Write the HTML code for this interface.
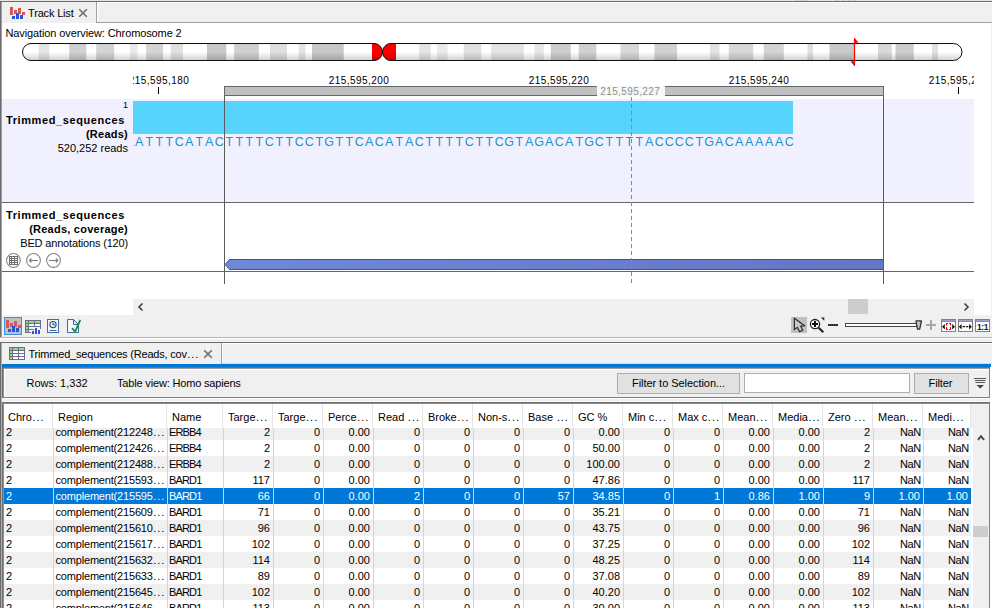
<!DOCTYPE html>
<html><head><meta charset="utf-8"><title>Track List</title>
<style>
html,body{margin:0;padding:0}
body{width:992px;height:608px;position:relative;overflow:hidden;background:#fff;font-family:"Liberation Sans",sans-serif;font-size:11px;color:#000}
.a{position:absolute}
.t{position:absolute;white-space:nowrap;line-height:14px}
.b{font-weight:bold}
.r{text-align:right}
.hd{position:absolute;top:404px;height:24px;background:#fff;line-height:27px;white-space:nowrap;overflow:hidden;box-sizing:border-box;padding-left:5px;border-right:1px solid #e5e5e5}
.row{position:absolute;left:4px;width:967px;height:16px}
.c{position:absolute;top:0;height:16px;line-height:17px;white-space:nowrap;overflow:hidden;box-sizing:border-box;padding:0 2px 0 2px;border-left:1px solid #d4d4d4}
.c.n{text-align:right;padding-right:3px}
.sel{background:#0078d7;color:#fff}
.g{background:#f0f0f0}
.e{letter-spacing:1px;margin-left:0.5px}
.c.nm{letter-spacing:-0.85px;padding-left:1px}
.c.rg{letter-spacing:-0.18px;padding-left:1.5px}
</style></head>
<body>
<div class="a" style="left:0;top:0;width:992px;height:1px;background:#e6e6e6"></div>
<div class="a" style="left:0;top:1px;width:992px;height:1px;background:#6d6d6d"></div>
<div class="a" style="left:795px;top:0;width:3px;height:1px;background:#cfcfcf"></div>
<div class="a" style="left:799px;top:0;width:3px;height:1px;background:#cfcfcf"></div>
<div class="a" style="left:803px;top:0;width:5px;height:1px;background:#cfcfcf"></div>
<div class="a" style="left:835px;top:0;width:4px;height:1px;background:#cfcfcf"></div>
<div class="a" style="left:842px;top:0;width:3px;height:1px;background:#cfcfcf"></div>
<div class="a" style="left:847px;top:0;width:3px;height:1px;background:#cfcfcf"></div>
<div class="a" style="left:852px;top:0;width:5px;height:1px;background:#cfcfcf"></div>
<div class="a" style="left:2px;top:2px;width:990px;height:21px;background:#f0f0f0"></div>
<div class="a" style="left:97px;top:2px;width:895px;height:1px;background:#fff"></div>
<div class="a" style="left:96px;top:2px;width:1px;height:21px;background:#a0a0a0"></div>
<div class="a" style="left:97px;top:3px;width:1px;height:19px;background:#fff"></div>
<div class="a" style="left:96px;top:22px;width:896px;height:1px;background:#a0a0a0"></div>
<div class="a" style="left:0;top:1px;width:1px;height:337px;background:#6d6d6d"></div>
<div class="a" style="left:1px;top:2px;width:1px;height:336px;background:#a0a0a0"></div>
<div class="a" style="left:991px;top:23px;width:1px;height:292px;background:#f0f0f0"></div>
<svg class="a" style="left:9px;top:6px" width="17" height="14" viewBox="9 6 17 14" shape-rendering="crispEdges"><rect x="10" y="7" width="3" height="8" fill="#d25a5a"/><rect x="14" y="10" width="3" height="4" fill="#d25a5a"/><rect x="18" y="8" width="3" height="6" fill="#d25a5a"/><rect x="22" y="12" width="3" height="3" fill="#d25a5a"/><rect x="12" y="16" width="3" height="3" fill="#2b55d4"/><rect x="16" y="13" width="3" height="6" fill="#2b55d4"/><rect x="20" y="15" width="3" height="4" fill="#2b55d4"/></svg>
<div class="t" style="left:28px;top:6px;letter-spacing:-0.17px">Track List</div>
<svg class="a" style="left:78px;top:8px" width="10" height="10" viewBox="0 0 10 10"><path d="M1.2 1.2 L8.8 8.8 M8.8 1.2 L1.2 8.8" stroke="#6e6e6e" stroke-width="1.6" fill="none"/></svg>
<div class="t" style="left:6px;top:26px;letter-spacing:-0.11px;margin-left:-0.5px">Navigation overview: Chromosome 2</div>
<svg class="a" style="left:0;top:36px" width="992" height="32" viewBox="0 36 992 32"><defs><linearGradient id="sh" x1="0" y1="0" x2="0" y2="1"><stop offset="0" stop-color="#000" stop-opacity="0.07"/><stop offset="0.15" stop-color="#000" stop-opacity="0"/><stop offset="0.5" stop-color="#000" stop-opacity="0"/><stop offset="1" stop-color="#000" stop-opacity="0.2"/></linearGradient><clipPath id="cl"><path d="M31 43.5 H374 C380 43.5 382.5 49 382.5 52 C382.5 49 385 43.5 391 43.5 H953.5 A8.5 8.5 0 0 1 953.5 60.5 H391 C385 60.5 382.5 55 382.5 52 C382.5 55 380 60.5 374 60.5 H31 A8.5 8.5 0 0 1 31 43.5 Z"/></clipPath></defs><g clip-path="url(#cl)"><rect x="22" y="43" width="941" height="18" fill="#fff"/><rect x="38.75" y="43" width="10.50" height="18" fill="#e4e4e4"/><rect x="69.25" y="43" width="17.00" height="18" fill="#d0d0d0"/><rect x="96.25" y="43" width="18.00" height="18" fill="#d4d4d4"/><rect x="130" y="43" width="7.50" height="18" fill="#eaeaea"/><rect x="146.25" y="43" width="16.75" height="18" fill="#d4d4d4"/><rect x="170.75" y="43" width="12.25" height="18" fill="#e0e0e0"/><rect x="207" y="43" width="19.25" height="18" fill="#c8c8c8"/><rect x="234.25" y="43" width="24.50" height="18" fill="#d0d0d0"/><rect x="270" y="43" width="17.00" height="18" fill="#dedede"/><rect x="298.75" y="43" width="6.75" height="18" fill="#e4e4e4"/><rect x="312" y="43" width="31.75" height="18" fill="#c8c8c8"/><rect x="419.25" y="43" width="11.50" height="18" fill="#e4e4e4"/><rect x="437" y="43" width="10.50" height="18" fill="#eaeaea"/><rect x="463.75" y="43" width="17.50" height="18" fill="#e0e0e0"/><rect x="491.25" y="43" width="32.50" height="18" fill="#e4e4e4"/><rect x="534.5" y="43" width="9.25" height="18" fill="#e6e6e6"/><rect x="550.75" y="43" width="20.00" height="18" fill="#cecece"/><rect x="578.75" y="43" width="17.50" height="18" fill="#d0d0d0"/><rect x="620.5" y="43" width="18.50" height="18" fill="#d8d8d8"/><rect x="654.5" y="43" width="22.50" height="18" fill="#d2d2d2"/><rect x="710" y="43" width="9.50" height="18" fill="#e2e2e2"/><rect x="728.75" y="43" width="24.50" height="18" fill="#d8d8d8"/><rect x="763.75" y="43" width="20.00" height="18" fill="#d4d4d4"/><rect x="807.5" y="43" width="5.50" height="18" fill="#e0e0e0"/><rect x="829.5" y="43" width="24.75" height="18" fill="#cacaca"/><rect x="878" y="43" width="13.75" height="18" fill="#d8d8d8"/><rect x="895.5" y="43" width="18.25" height="18" fill="#cecece"/><rect x="932" y="43" width="6.00" height="18" fill="#e0e0e0"/><rect x="372" y="43" width="24" height="18" fill="#ff0000"/><rect x="22" y="43" width="941" height="18" fill="url(#sh)"/></g><path d="M31 43.5 H374 C380 43.5 382.5 49 382.5 52 C382.5 49 385 43.5 391 43.5 H953.5 A8.5 8.5 0 0 1 953.5 60.5 H391 C385 60.5 382.5 55 382.5 52 C382.5 55 380 60.5 374 60.5 H31 A8.5 8.5 0 0 1 31 43.5 Z" fill="none" stroke="#111" stroke-width="1"/><path d="M854.5 38 V66" stroke="#ff0000" stroke-width="1.2"/><path d="M854.5 38 L858.5 42.5 L854.5 43 Z M854.5 66 L850.5 61.5 L854.5 61 Z" fill="#ff0000"/></svg>
<div class="a" style="left:2px;top:99px;width:972px;height:103px;background:#f0f0ff"></div>
<div class="a" style="left:2px;top:202px;width:972px;height:1px;background:#666"></div>
<div class="a" style="left:2px;top:271px;width:972px;height:1px;background:#666"></div>
<div class="a" style="left:133px;top:70px;width:841px;height:28px;overflow:hidden;font-size:10px;letter-spacing:0.45px">
<div class="t" style="left:-14.0px;width:80px;text-align:center;top:3.5px">215,595,180</div>
<div class="t" style="left:186.0px;width:80px;text-align:center;top:3.5px">215,595,200</div>
<div class="t" style="left:386.0px;width:80px;text-align:center;top:3.5px">215,595,220</div>
<div class="t" style="left:586.0px;width:80px;text-align:center;top:3.5px">215,595,240</div>
<div class="t" style="left:786.0px;width:80px;text-align:center;top:3.5px">215,595,260</div>
<div class="a" style="left:25px;top:17px;width:1px;height:7px;background:#000"></div>
<div class="a" style="left:825px;top:17px;width:1px;height:7px;background:#000"></div>
</div>
<div class="a" style="left:133px;top:101px;width:660px;height:33px;background:#56d4fd"></div>
<svg class="a" style="left:133px;top:134px" width="841" height="16" viewBox="0 0 841 16"><text x="-3.8 6.2 16.2 26.2 36.2 46.2 56.2 66.2 76.2 86.2 96.2 106.2 116.2 126.2 136.2 146.2 156.2 166.2 176.2 186.2 196.2 206.2 216.2 226.2 236.2 246.2 256.2 266.2 276.2 286.2 296.2 306.2 316.2 326.2 336.2 346.2 356.2 366.2 376.2 386.2 396.2 406.2 416.2 426.2 436.2 446.2 456.2 466.2 476.2 486.2 496.2 506.2 516.2 526.2 536.2 546.2 556.2 566.2 576.2 586.2 596.2 606.2 616.2 626.2 636.2 646.2 656.2" y="12.3" text-anchor="middle" font-family="Liberation Sans, sans-serif" font-size="12.5" fill="#1e90c8">AATTTCATACTTTTCTTCCTGTTCACATACTTTTCTTCGTAGACATGCTTTTACCCCTGACAAAAAC</text></svg>
<div class="t r" style="left:60px;width:68px;top:99.3px;font-size:9px;line-height:12px">1</div>
<div class="t r b" style="left:0;width:125px;top:113px;letter-spacing:0.6px">Trimmed_sequences</div>
<div class="t r b" style="left:0;width:128px;top:127px;letter-spacing:0.25px">(Reads)</div>
<div class="t r" style="left:0;width:128px;top:141px">520,252 reads</div>
<div class="t r b" style="left:0;width:125px;top:208px;letter-spacing:0.6px">Trimmed_sequences</div>
<div class="t r b" style="left:0;width:128px;top:222px;letter-spacing:0.24px">(Reads, coverage)</div>
<div class="t r" style="left:0;width:128px;top:236px;letter-spacing:-0.17px">BED annotations (120)</div>
<svg class="a" style="left:5px;top:252px" width="60" height="17" viewBox="5 252 60 17" fill="none" stroke="#868686" stroke-width="1.1"><circle cx="13.4" cy="260.45" r="6.9"/><circle cx="33.5" cy="260.45" r="6.9"/><circle cx="53.5" cy="260.45" r="6.9"/><path d="M9.5 256.5 H17.5 V264.5 H9.5 Z M9.5 258.5 H17.5 M9.5 260.5 H17.5 M9.5 262.5 H17.5 M11.5 256.5 V264.5 M14.5 256.5 V264.5" stroke="#6c6c6c" stroke-width="1" shape-rendering="crispEdges"/><path d="M29.4 260.5 H37.8 M31.4 258.5 L29.4 260.5 L31.4 262.5" stroke="#7c7c7c" stroke-width="1.2"/><path d="M49.1 260.5 H57.8 M55.8 258.5 L57.8 260.5 L55.8 262.5" stroke="#7c7c7c" stroke-width="1.2"/></svg>
<svg class="a" style="left:224px;top:257px" width="661" height="14" viewBox="224 257 661 14"><defs><linearGradient id="ag" x1="0" y1="0" x2="1" y2="0"><stop offset="0" stop-color="#7088d8"/><stop offset="1" stop-color="#6277c6"/></linearGradient></defs><path d="M229.5 259.5 H883.5 V269.5 H229.5 L225 264.5 Z" fill="url(#ag)" stroke="#3e4e9c" stroke-width="1"/></svg>
<div class="a" style="left:224px;top:86px;width:660px;height:10px;background:#c0c0c0;border:1px solid #666;box-sizing:border-box"></div>
<div class="a" style="left:224px;top:96px;width:1px;height:188px;background:#5c5c5c"></div>
<div class="a" style="left:883px;top:96px;width:1px;height:188px;background:#5c5c5c"></div>
<div class="a" style="left:631px;top:97px;height:186px;background:repeating-linear-gradient(to bottom,#888 0,#888 4px,transparent 4px,transparent 7px);width:1px"></div>
<div class="t" style="left:597px;top:86px;width:68px;height:10px;line-height:11px;background:#f8f8f8;color:#8e8e8e;text-align:center;font-size:10px;letter-spacing:0.4px;text-indent:-1.5px">215,595,227</div>
<div class="a" style="left:133px;top:299px;width:841px;height:16px;background:#f0f0f0"></div>
<div class="a" style="left:848px;top:299px;width:20px;height:15px;background:#cdcdcd"></div>
<svg class="a" style="left:136px;top:301.5px" width="10" height="10" viewBox="0 0 10 10"><path d="M6.5 1.5 L3 5 L6.5 8.5" stroke="#404040" stroke-width="1.6" fill="none"/></svg>
<svg class="a" style="left:961px;top:301.5px" width="10" height="10" viewBox="0 0 10 10"><path d="M3.5 1.5 L7 5 L3.5 8.5" stroke="#404040" stroke-width="1.6" fill="none"/></svg>
<div class="a" style="left:2px;top:315px;width:990px;height:22px;background:#f0f0f0"></div>
<div class="a" style="left:0;top:337px;width:992px;height:1px;background:#b4b4b4"></div>
<div class="a" style="left:0;top:338px;width:992px;height:1px;background:#fff"></div>
<div class="a" style="left:0;top:339px;width:992px;height:3px;background:#f0f0f0"></div>
<div class="a" style="left:0;top:342px;width:992px;height:1px;background:#6d6d6d"></div>
<div class="a" style="left:2px;top:343px;width:219px;height:1px;background:#f0f0f0"></div>
<div class="a" style="left:222px;top:343px;width:770px;height:1px;background:#fff"></div>
<div class="a" style="left:4px;top:317px;width:18px;height:18px;box-sizing:border-box;border:1px solid #3a8ee6;background:#c0c0c0"></div>
<svg class="a" style="left:5px;top:319px" width="17" height="14" viewBox="9 6 17 14" shape-rendering="crispEdges"><rect x="10" y="7" width="3" height="8" fill="#d25a5a"/><rect x="14" y="10" width="3" height="4" fill="#d25a5a"/><rect x="18" y="8" width="3" height="6" fill="#d25a5a"/><rect x="22" y="12" width="3" height="3" fill="#d25a5a"/><rect x="12" y="16" width="3" height="3" fill="#2b55d4"/><rect x="16" y="13" width="3" height="6" fill="#2b55d4"/><rect x="20" y="15" width="3" height="4" fill="#2b55d4"/></svg>
<svg class="a" style="left:25px;top:320px" width="17" height="15" viewBox="0 0 17 15" shape-rendering="crispEdges"><rect x="0" y="0" width="16" height="13" fill="#6c6c8c"/><rect x="1" y="1" width="2" height="2" fill="#9ad77a"/><rect x="4" y="1" width="5" height="2" fill="#9ad77a"/><rect x="10" y="1" width="5" height="2" fill="#9ad77a"/><rect x="1" y="4" width="2" height="2" fill="#9ad77a"/><rect x="4" y="4" width="5" height="2" fill="#f4f8ff"/><rect x="10" y="4" width="5" height="2" fill="#f4f8ff"/><rect x="1" y="7" width="2" height="2" fill="#9ad77a"/><rect x="4" y="7" width="5" height="2" fill="#f4f8ff"/><rect x="10" y="7" width="5" height="2" fill="#f4f8ff"/><rect x="1" y="10" width="2" height="2" fill="#9ad77a"/><rect x="4" y="10" width="5" height="2" fill="#f4f8ff"/><rect x="10" y="10" width="5" height="2" fill="#f4f8ff"/><rect x="6" y="10" width="4" height="5" fill="#f0f0f0"/><rect x="9" y="7" width="4" height="8" fill="#f0f0f0"/><rect x="12" y="9" width="4" height="6" fill="#f0f0f0"/><rect x="6" y="13" width="11" height="2" fill="#f0f0f0"/><rect x="7" y="11" width="2" height="3" fill="#2b55d4"/><rect x="10" y="8" width="2" height="6" fill="#2b55d4"/><rect x="13" y="10" width="2" height="4" fill="#2b55d4"/></svg>
<svg class="a" style="left:46px;top:318px" width="15" height="17" viewBox="46 318 15 17"><rect x="47.5" y="319.5" width="11" height="13" fill="#f4f8fc" stroke="#3b6ea8"/><circle cx="53" cy="324.6" r="3.1" fill="#fff" stroke="#2b5080" stroke-width="1.2"/><path d="M53 322.6 V324.8 H55" stroke="#2b5080" fill="none" stroke-width="1.1"/><path d="M49.5 330.5 H56.5" stroke="#3b6ea8"/></svg>
<svg class="a" style="left:66px;top:318px" width="17" height="17" viewBox="66 318 17 17"><path d="M67.5 319.5 H73.5 L78.5 324.5 V332.5 H67.5 Z" fill="#f4f8fc" stroke="#3b6ea8"/><path d="M73.5 319.5 V324.5 H78.5 Z" fill="#dfe8f2" stroke="#3b6ea8"/><path d="M72 328.2 L75.2 331.6 L80.3 319.8" fill="none" stroke="#1f8a2f" stroke-width="1.8"/></svg>
<div class="a" style="left:791px;top:317px;width:16px;height:16px;background:#c0c0c0"></div>
<svg class="a" style="left:791px;top:317px" width="16" height="16" viewBox="791 317 16 16"><path d="M794.4 318.2 V329.6 L797.3 327.3 L799.6 331.6 L802.7 330.2 L800.7 326.3 L804.4 325.7 Z" fill="#c8c8c8" stroke="#303030" stroke-width="1.2" stroke-linejoin="miter"/></svg>
<svg class="a" style="left:809px;top:317px" width="16" height="17" viewBox="809 317 16 17"><circle cx="815" cy="324.1" r="4.6" fill="#fff" stroke="#222" stroke-width="1.3"/><path d="M812 324 H818 M815 321 V327" stroke="#111" stroke-width="2"/><path d="M818.6 327.8 L823.3 332.2" stroke="#222" stroke-width="2.2"/><path d="M820.9 317.4 H824.3 V320.7 Z" fill="#2a2a2a"/></svg>
<div class="a" style="left:828px;top:324px;width:10px;height:2px;background:#303030"></div>
<div class="a" style="left:845px;top:323px;width:72px;height:4px;box-sizing:border-box;border:1px solid #444;background:#fff"></div>
<svg class="a" style="left:914px;top:319px" width="10" height="12" viewBox="914 319 10 12"><defs><linearGradient id="th" x1="0" y1="0" x2="1" y2="0"><stop offset="0" stop-color="#e0e0e0"/><stop offset="1" stop-color="#a8a8a8"/></linearGradient></defs><path d="M916 320.9 H921.5 L919.7 329.1 H917.5 Z" fill="url(#th)" stroke="#333" stroke-width="1.3" stroke-linejoin="round"/></svg>
<div class="a" style="left:926px;top:324px;width:10px;height:2px;background:#a8a8a8"></div><div class="a" style="left:930px;top:320px;width:2px;height:10px;background:#a8a8a8"></div>
<div class="a" style="left:941px;top:319px;width:15px;height:13px;box-sizing:border-box;border:1px solid #808080;background:#fff"></div>
<div class="a" style="left:942px;top:320px;width:13px;height:1px;background:#a0a0c8"></div>
<div class="a" style="left:942px;top:321px;width:13px;height:1px;background:#8c8c9c"></div>
<div class="a" style="left:958px;top:319px;width:15px;height:13px;box-sizing:border-box;border:1px solid #808080;background:#fff"></div>
<div class="a" style="left:959px;top:320px;width:13px;height:1px;background:#a0a0c8"></div>
<div class="a" style="left:959px;top:321px;width:13px;height:1px;background:#8c8c9c"></div>
<div class="a" style="left:975px;top:319px;width:15px;height:13px;box-sizing:border-box;border:1px solid #808080;background:#fff"></div>
<div class="a" style="left:976px;top:320px;width:13px;height:1px;background:#a0a0c8"></div>
<div class="a" style="left:976px;top:321px;width:13px;height:1px;background:#8c8c9c"></div>
<svg class="a" style="left:941px;top:322px" width="15" height="9" viewBox="941 322 15 9"><path d="M942 326.7 L944.8 324 V329.4 Z M955 326.7 L952.2 324 V329.4 Z" fill="#111"/><path d="M946.5 325.5 V323.5 H948 M949 323.5 H950.5 V325.5 M950.5 327 V329.5 H949 M948 329.5 H946.5 V327" fill="none" stroke="#f00000" stroke-width="1.1"/></svg>
<svg class="a" style="left:958px;top:322px" width="15" height="9" viewBox="958 322 15 9"><path d="M958.8 326.7 L961.6 324 V329.4 Z M971.9 326.7 L969.1 324 V329.4 Z" fill="#111"/><path d="M962.6 326.7 H965.1 M966 326.7 H968.3" stroke="#111" stroke-width="1.2"/></svg>
<div class="t b" style="left:976px;top:322px;width:13px;text-align:center;font-size:8.5px;line-height:10px;color:#1a1a1a;letter-spacing:-0.4px">1:1</div>
<div class="a" style="left:0;top:342px;width:1px;height:266px;background:#6a6a6a"></div>
<div class="a" style="left:1px;top:343px;width:1px;height:265px;background:#b0b0b0"></div>
<div class="a" style="left:2px;top:344px;width:990px;height:20px;background:#f0f0f0"></div>
<div class="a" style="left:221px;top:343px;width:1px;height:21px;background:#a0a0a0"></div>
<div class="a" style="left:222px;top:344px;width:1px;height:20px;background:#fff"></div>
<div class="a" style="left:222px;top:363px;width:770px;height:1px;background:#dcd8d4"></div>
<svg class="a" style="left:9px;top:347px" width="16" height="13" viewBox="0 0 16 13" shape-rendering="crispEdges"><rect x="0" y="0" width="16" height="13" fill="#6c6c8c"/><rect x="1" y="1" width="2" height="2" fill="#9ad77a"/><rect x="4" y="1" width="5" height="2" fill="#9ad77a"/><rect x="10" y="1" width="5" height="2" fill="#9ad77a"/><rect x="1" y="4" width="2" height="2" fill="#9ad77a"/><rect x="4" y="4" width="5" height="2" fill="#fff"/><rect x="10" y="4" width="5" height="2" fill="#fff"/><rect x="1" y="7" width="2" height="2" fill="#9ad77a"/><rect x="4" y="7" width="5" height="2" fill="#fff"/><rect x="10" y="7" width="5" height="2" fill="#fff"/><rect x="1" y="10" width="2" height="2" fill="#9ad77a"/><rect x="4" y="10" width="5" height="2" fill="#fff"/><rect x="10" y="10" width="5" height="2" fill="#fff"/></svg>
<div class="t" style="left:28.5px;top:347px;letter-spacing:-0.2px">Trimmed_sequences (Reads, cov<span class="e">...</span></div>
<svg class="a" style="left:202.7px;top:349px" width="10" height="10" viewBox="0 0 10 10"><path d="M1.2 1.2 L8.8 8.8 M8.8 1.2 L1.2 8.8" stroke="#6e6e6e" stroke-width="1.6" fill="none"/></svg>
<div class="a" style="left:2px;top:364px;width:989px;height:3px;background:#0078d7"></div>
<div class="a" style="left:2px;top:367px;width:988px;height:31px;background:#f0f0f0"></div>
<div class="a" style="left:2px;top:367px;width:988px;height:1px;background:#6e6e6e"></div>
<div class="a" style="left:2px;top:367px;width:1px;height:31px;background:#6e6e6e"></div>
<div class="a" style="left:3px;top:368px;width:986px;height:1px;background:#9a9ca4"></div>
<div class="a" style="left:3px;top:368px;width:1px;height:29px;background:#8a8e98"></div>
<div class="a" style="left:4px;top:369px;width:985px;height:1px;background:#fff"></div>
<div class="a" style="left:4px;top:369px;width:1px;height:28px;background:#fff"></div>
<div class="a" style="left:3px;top:397px;width:987px;height:1px;background:#7a7e88"></div>
<div class="a" style="left:989px;top:368px;width:1px;height:30px;background:#7a7e88"></div>
<div class="a" style="left:2px;top:398px;width:989px;height:1px;background:#fff"></div>
<div class="a" style="left:2px;top:399px;width:990px;height:2px;background:#f0f0f0"></div>
<div class="a" style="left:2px;top:401px;width:990px;height:1px;background:#fff"></div>
<div class="t" style="left:26.5px;top:376px">Rows: 1,332</div>
<div class="t" style="left:117px;top:376px;letter-spacing:-0.17px">Table view: Homo sapiens</div>
<div class="a" style="left:617px;top:373px;width:123px;height:21px;box-sizing:border-box;border:1px solid #adadad;background:#e1e1e1;text-align:center;line-height:18px;letter-spacing:-0.05px">Filter to Selection...</div>
<div class="a" style="left:744px;top:373px;width:166px;height:20px;box-sizing:border-box;border:1px solid #abadb3;background:#fff"></div>
<div class="a" style="left:914px;top:373px;width:55px;height:21px;box-sizing:border-box;border:1px solid #adadad;background:#e1e1e1;text-align:center;line-height:18px;letter-spacing:-0.1px;padding-right:2px">Filter</div>
<svg class="a" style="left:973px;top:377px" width="14" height="12" viewBox="973 377 14 12"><path d="M974 378.5 H986 M975 380.5 H985.5 M975.5 382.5 H985" stroke="#555" stroke-width="1"/><path d="M976.5 385 H984 L980.25 388.5 Z" fill="#444"/></svg>
<div class="a" style="left:2px;top:402px;width:988px;height:206px;background:#f0f0f0"></div>
<div class="a" style="left:2px;top:402px;width:988px;height:1px;background:#6a6a6a"></div>
<div class="a" style="left:2px;top:402px;width:1px;height:206px;background:#6e6e6e"></div>
<div class="a" style="left:3px;top:403px;width:986px;height:1px;background:#8a8e98"></div>
<div class="a" style="left:3px;top:403px;width:1px;height:205px;background:#8a8e98"></div>
<div class="a" style="left:989px;top:403px;width:1px;height:205px;background:#7a7e88"></div>
<div class="hd" style="left:4px;width:49px;padding-left:4px">Chro<span class="e">...</span></div>
<div class="hd" style="left:53px;width:114px">Region</div>
<div class="hd" style="left:167px;width:56px">Name</div>
<div class="hd" style="left:223px;width:50px">Targe<span class="e">...</span></div>
<div class="hd" style="left:273px;width:50px">Targe<span class="e">...</span></div>
<div class="hd" style="left:323px;width:50px">Perce<span class="e">...</span></div>
<div class="hd" style="left:373px;width:50px">Read <span class="e">...</span></div>
<div class="hd" style="left:423px;width:50px">Broke<span class="e">...</span></div>
<div class="hd" style="left:473px;width:50px">Non-s<span class="e">...</span></div>
<div class="hd" style="left:523px;width:50px">Base <span class="e">...</span></div>
<div class="hd" style="left:573px;width:50px">GC %</div>
<div class="hd" style="left:623px;width:50px">Min c<span class="e">...</span></div>
<div class="hd" style="left:673px;width:50px">Max c<span class="e">...</span></div>
<div class="hd" style="left:723px;width:50px">Mean<span class="e">...</span></div>
<div class="hd" style="left:773px;width:50px">Media<span class="e">...</span></div>
<div class="hd" style="left:823px;width:50px">Zero <span class="e">...</span></div>
<div class="hd" style="left:873px;width:50px">Mean<span class="e">...</span></div>
<div class="hd" style="left:923px;width:48px">Medi<span class="e">...</span></div>
<div class="a" style="left:0;top:428px;width:992px;height:180px;overflow:hidden">
<div class="row g" style="top:-4px;">
<div class="c" style="left:0px;width:49px;border-left:none;padding-left:2px;">2</div>
<div class="c rg" style="left:49px;width:114px;">complement(212248<span class="e">...</span></div>
<div class="c nm" style="left:163px;width:56px;">ERBB4</div>
<div class="c n" style="left:219px;width:50px;">2</div>
<div class="c n" style="left:269px;width:50px;">0</div>
<div class="c n" style="left:319px;width:50px;">0.00</div>
<div class="c n" style="left:369px;width:50px;">0</div>
<div class="c n" style="left:419px;width:50px;">0</div>
<div class="c n" style="left:469px;width:50px;">0</div>
<div class="c n" style="left:519px;width:50px;">0</div>
<div class="c n" style="left:569px;width:50px;">0.00</div>
<div class="c n" style="left:619px;width:50px;">0</div>
<div class="c n" style="left:669px;width:50px;">0</div>
<div class="c n" style="left:719px;width:50px;">0.00</div>
<div class="c n" style="left:769px;width:50px;">0.00</div>
<div class="c n" style="left:819px;width:50px;">2</div>
<div class="c n" style="left:869px;width:50px;padding-right:2px;letter-spacing:-0.3px;">NaN</div>
<div class="c n" style="left:919px;width:48px;padding-right:2px;letter-spacing:-0.3px;">NaN</div>
</div>
<div class="row" style="top:12px;background:#fff;">
<div class="c" style="left:0px;width:49px;border-left:none;padding-left:2px;">2</div>
<div class="c rg" style="left:49px;width:114px;">complement(212426<span class="e">...</span></div>
<div class="c nm" style="left:163px;width:56px;">ERBB4</div>
<div class="c n" style="left:219px;width:50px;">2</div>
<div class="c n" style="left:269px;width:50px;">0</div>
<div class="c n" style="left:319px;width:50px;">0.00</div>
<div class="c n" style="left:369px;width:50px;">0</div>
<div class="c n" style="left:419px;width:50px;">0</div>
<div class="c n" style="left:469px;width:50px;">0</div>
<div class="c n" style="left:519px;width:50px;">0</div>
<div class="c n" style="left:569px;width:50px;">50.00</div>
<div class="c n" style="left:619px;width:50px;">0</div>
<div class="c n" style="left:669px;width:50px;">0</div>
<div class="c n" style="left:719px;width:50px;">0.00</div>
<div class="c n" style="left:769px;width:50px;">0.00</div>
<div class="c n" style="left:819px;width:50px;">2</div>
<div class="c n" style="left:869px;width:50px;padding-right:2px;letter-spacing:-0.3px;">NaN</div>
<div class="c n" style="left:919px;width:48px;padding-right:2px;letter-spacing:-0.3px;">NaN</div>
</div>
<div class="row g" style="top:28px;">
<div class="c" style="left:0px;width:49px;border-left:none;padding-left:2px;">2</div>
<div class="c rg" style="left:49px;width:114px;">complement(212488<span class="e">...</span></div>
<div class="c nm" style="left:163px;width:56px;">ERBB4</div>
<div class="c n" style="left:219px;width:50px;">2</div>
<div class="c n" style="left:269px;width:50px;">0</div>
<div class="c n" style="left:319px;width:50px;">0.00</div>
<div class="c n" style="left:369px;width:50px;">0</div>
<div class="c n" style="left:419px;width:50px;">0</div>
<div class="c n" style="left:469px;width:50px;">0</div>
<div class="c n" style="left:519px;width:50px;">0</div>
<div class="c n" style="left:569px;width:50px;">100.00</div>
<div class="c n" style="left:619px;width:50px;">0</div>
<div class="c n" style="left:669px;width:50px;">0</div>
<div class="c n" style="left:719px;width:50px;">0.00</div>
<div class="c n" style="left:769px;width:50px;">0.00</div>
<div class="c n" style="left:819px;width:50px;">2</div>
<div class="c n" style="left:869px;width:50px;padding-right:2px;letter-spacing:-0.3px;">NaN</div>
<div class="c n" style="left:919px;width:48px;padding-right:2px;letter-spacing:-0.3px;">NaN</div>
</div>
<div class="row" style="top:44px;background:#fff;">
<div class="c" style="left:0px;width:49px;border-left:none;padding-left:2px;">2</div>
<div class="c rg" style="left:49px;width:114px;">complement(215593<span class="e">...</span></div>
<div class="c nm" style="left:163px;width:56px;">BARD1</div>
<div class="c n" style="left:219px;width:50px;">117</div>
<div class="c n" style="left:269px;width:50px;">0</div>
<div class="c n" style="left:319px;width:50px;">0.00</div>
<div class="c n" style="left:369px;width:50px;">0</div>
<div class="c n" style="left:419px;width:50px;">0</div>
<div class="c n" style="left:469px;width:50px;">0</div>
<div class="c n" style="left:519px;width:50px;">0</div>
<div class="c n" style="left:569px;width:50px;">47.86</div>
<div class="c n" style="left:619px;width:50px;">0</div>
<div class="c n" style="left:669px;width:50px;">0</div>
<div class="c n" style="left:719px;width:50px;">0.00</div>
<div class="c n" style="left:769px;width:50px;">0.00</div>
<div class="c n" style="left:819px;width:50px;">117</div>
<div class="c n" style="left:869px;width:50px;padding-right:2px;letter-spacing:-0.3px;">NaN</div>
<div class="c n" style="left:919px;width:48px;padding-right:2px;letter-spacing:-0.3px;">NaN</div>
</div>
<div class="row sel" style="top:60px;">
<div class="c" style="left:0px;width:49px;border-left:none;padding-left:2px;">2</div>
<div class="c rg" style="left:49px;width:114px;">complement(215595<span class="e">...</span></div>
<div class="c nm" style="left:163px;width:56px;">BARD1</div>
<div class="c n" style="left:219px;width:50px;">66</div>
<div class="c n" style="left:269px;width:50px;">0</div>
<div class="c n" style="left:319px;width:50px;">0.00</div>
<div class="c n" style="left:369px;width:50px;">2</div>
<div class="c n" style="left:419px;width:50px;">0</div>
<div class="c n" style="left:469px;width:50px;">0</div>
<div class="c n" style="left:519px;width:50px;">57</div>
<div class="c n" style="left:569px;width:50px;">34.85</div>
<div class="c n" style="left:619px;width:50px;">0</div>
<div class="c n" style="left:669px;width:50px;">1</div>
<div class="c n" style="left:719px;width:50px;">0.86</div>
<div class="c n" style="left:769px;width:50px;">1.00</div>
<div class="c n" style="left:819px;width:50px;">9</div>
<div class="c n" style="left:869px;width:50px;">1.00</div>
<div class="c n" style="left:919px;width:48px;">1.00</div>
</div>
<div class="row" style="top:76px;background:#fff;">
<div class="c" style="left:0px;width:49px;border-left:none;padding-left:2px;">2</div>
<div class="c rg" style="left:49px;width:114px;">complement(215609<span class="e">...</span></div>
<div class="c nm" style="left:163px;width:56px;">BARD1</div>
<div class="c n" style="left:219px;width:50px;">71</div>
<div class="c n" style="left:269px;width:50px;">0</div>
<div class="c n" style="left:319px;width:50px;">0.00</div>
<div class="c n" style="left:369px;width:50px;">0</div>
<div class="c n" style="left:419px;width:50px;">0</div>
<div class="c n" style="left:469px;width:50px;">0</div>
<div class="c n" style="left:519px;width:50px;">0</div>
<div class="c n" style="left:569px;width:50px;">35.21</div>
<div class="c n" style="left:619px;width:50px;">0</div>
<div class="c n" style="left:669px;width:50px;">0</div>
<div class="c n" style="left:719px;width:50px;">0.00</div>
<div class="c n" style="left:769px;width:50px;">0.00</div>
<div class="c n" style="left:819px;width:50px;">71</div>
<div class="c n" style="left:869px;width:50px;padding-right:2px;letter-spacing:-0.3px;">NaN</div>
<div class="c n" style="left:919px;width:48px;padding-right:2px;letter-spacing:-0.3px;">NaN</div>
</div>
<div class="row g" style="top:92px;">
<div class="c" style="left:0px;width:49px;border-left:none;padding-left:2px;">2</div>
<div class="c rg" style="left:49px;width:114px;">complement(215610<span class="e">...</span></div>
<div class="c nm" style="left:163px;width:56px;">BARD1</div>
<div class="c n" style="left:219px;width:50px;">96</div>
<div class="c n" style="left:269px;width:50px;">0</div>
<div class="c n" style="left:319px;width:50px;">0.00</div>
<div class="c n" style="left:369px;width:50px;">0</div>
<div class="c n" style="left:419px;width:50px;">0</div>
<div class="c n" style="left:469px;width:50px;">0</div>
<div class="c n" style="left:519px;width:50px;">0</div>
<div class="c n" style="left:569px;width:50px;">43.75</div>
<div class="c n" style="left:619px;width:50px;">0</div>
<div class="c n" style="left:669px;width:50px;">0</div>
<div class="c n" style="left:719px;width:50px;">0.00</div>
<div class="c n" style="left:769px;width:50px;">0.00</div>
<div class="c n" style="left:819px;width:50px;">96</div>
<div class="c n" style="left:869px;width:50px;padding-right:2px;letter-spacing:-0.3px;">NaN</div>
<div class="c n" style="left:919px;width:48px;padding-right:2px;letter-spacing:-0.3px;">NaN</div>
</div>
<div class="row" style="top:108px;background:#fff;">
<div class="c" style="left:0px;width:49px;border-left:none;padding-left:2px;">2</div>
<div class="c rg" style="left:49px;width:114px;">complement(215617<span class="e">...</span></div>
<div class="c nm" style="left:163px;width:56px;">BARD1</div>
<div class="c n" style="left:219px;width:50px;">102</div>
<div class="c n" style="left:269px;width:50px;">0</div>
<div class="c n" style="left:319px;width:50px;">0.00</div>
<div class="c n" style="left:369px;width:50px;">0</div>
<div class="c n" style="left:419px;width:50px;">0</div>
<div class="c n" style="left:469px;width:50px;">0</div>
<div class="c n" style="left:519px;width:50px;">0</div>
<div class="c n" style="left:569px;width:50px;">37.25</div>
<div class="c n" style="left:619px;width:50px;">0</div>
<div class="c n" style="left:669px;width:50px;">0</div>
<div class="c n" style="left:719px;width:50px;">0.00</div>
<div class="c n" style="left:769px;width:50px;">0.00</div>
<div class="c n" style="left:819px;width:50px;">102</div>
<div class="c n" style="left:869px;width:50px;padding-right:2px;letter-spacing:-0.3px;">NaN</div>
<div class="c n" style="left:919px;width:48px;padding-right:2px;letter-spacing:-0.3px;">NaN</div>
</div>
<div class="row g" style="top:124px;">
<div class="c" style="left:0px;width:49px;border-left:none;padding-left:2px;">2</div>
<div class="c rg" style="left:49px;width:114px;">complement(215632<span class="e">...</span></div>
<div class="c nm" style="left:163px;width:56px;">BARD1</div>
<div class="c n" style="left:219px;width:50px;">114</div>
<div class="c n" style="left:269px;width:50px;">0</div>
<div class="c n" style="left:319px;width:50px;">0.00</div>
<div class="c n" style="left:369px;width:50px;">0</div>
<div class="c n" style="left:419px;width:50px;">0</div>
<div class="c n" style="left:469px;width:50px;">0</div>
<div class="c n" style="left:519px;width:50px;">0</div>
<div class="c n" style="left:569px;width:50px;">48.25</div>
<div class="c n" style="left:619px;width:50px;">0</div>
<div class="c n" style="left:669px;width:50px;">0</div>
<div class="c n" style="left:719px;width:50px;">0.00</div>
<div class="c n" style="left:769px;width:50px;">0.00</div>
<div class="c n" style="left:819px;width:50px;">114</div>
<div class="c n" style="left:869px;width:50px;padding-right:2px;letter-spacing:-0.3px;">NaN</div>
<div class="c n" style="left:919px;width:48px;padding-right:2px;letter-spacing:-0.3px;">NaN</div>
</div>
<div class="row" style="top:140px;background:#fff;">
<div class="c" style="left:0px;width:49px;border-left:none;padding-left:2px;">2</div>
<div class="c rg" style="left:49px;width:114px;">complement(215633<span class="e">...</span></div>
<div class="c nm" style="left:163px;width:56px;">BARD1</div>
<div class="c n" style="left:219px;width:50px;">89</div>
<div class="c n" style="left:269px;width:50px;">0</div>
<div class="c n" style="left:319px;width:50px;">0.00</div>
<div class="c n" style="left:369px;width:50px;">0</div>
<div class="c n" style="left:419px;width:50px;">0</div>
<div class="c n" style="left:469px;width:50px;">0</div>
<div class="c n" style="left:519px;width:50px;">0</div>
<div class="c n" style="left:569px;width:50px;">37.08</div>
<div class="c n" style="left:619px;width:50px;">0</div>
<div class="c n" style="left:669px;width:50px;">0</div>
<div class="c n" style="left:719px;width:50px;">0.00</div>
<div class="c n" style="left:769px;width:50px;">0.00</div>
<div class="c n" style="left:819px;width:50px;">89</div>
<div class="c n" style="left:869px;width:50px;padding-right:2px;letter-spacing:-0.3px;">NaN</div>
<div class="c n" style="left:919px;width:48px;padding-right:2px;letter-spacing:-0.3px;">NaN</div>
</div>
<div class="row g" style="top:156px;">
<div class="c" style="left:0px;width:49px;border-left:none;padding-left:2px;">2</div>
<div class="c rg" style="left:49px;width:114px;">complement(215645<span class="e">...</span></div>
<div class="c nm" style="left:163px;width:56px;">BARD1</div>
<div class="c n" style="left:219px;width:50px;">102</div>
<div class="c n" style="left:269px;width:50px;">0</div>
<div class="c n" style="left:319px;width:50px;">0.00</div>
<div class="c n" style="left:369px;width:50px;">0</div>
<div class="c n" style="left:419px;width:50px;">0</div>
<div class="c n" style="left:469px;width:50px;">0</div>
<div class="c n" style="left:519px;width:50px;">0</div>
<div class="c n" style="left:569px;width:50px;">40.20</div>
<div class="c n" style="left:619px;width:50px;">0</div>
<div class="c n" style="left:669px;width:50px;">0</div>
<div class="c n" style="left:719px;width:50px;">0.00</div>
<div class="c n" style="left:769px;width:50px;">0.00</div>
<div class="c n" style="left:819px;width:50px;">102</div>
<div class="c n" style="left:869px;width:50px;padding-right:2px;letter-spacing:-0.3px;">NaN</div>
<div class="c n" style="left:919px;width:48px;padding-right:2px;letter-spacing:-0.3px;">NaN</div>
</div>
<div class="row" style="top:172px;background:#fff;">
<div class="c" style="left:0px;width:49px;border-left:none;padding-left:2px;">2</div>
<div class="c rg" style="left:49px;width:114px;">complement(215646<span class="e">...</span></div>
<div class="c nm" style="left:163px;width:56px;">BARD1</div>
<div class="c n" style="left:219px;width:50px;">113</div>
<div class="c n" style="left:269px;width:50px;">0</div>
<div class="c n" style="left:319px;width:50px;">0.00</div>
<div class="c n" style="left:369px;width:50px;">0</div>
<div class="c n" style="left:419px;width:50px;">0</div>
<div class="c n" style="left:469px;width:50px;">0</div>
<div class="c n" style="left:519px;width:50px;">0</div>
<div class="c n" style="left:569px;width:50px;">30.00</div>
<div class="c n" style="left:619px;width:50px;">0</div>
<div class="c n" style="left:669px;width:50px;">0</div>
<div class="c n" style="left:719px;width:50px;">0.00</div>
<div class="c n" style="left:769px;width:50px;">0.00</div>
<div class="c n" style="left:819px;width:50px;">113</div>
<div class="c n" style="left:869px;width:50px;padding-right:2px;letter-spacing:-0.3px;">NaN</div>
<div class="c n" style="left:919px;width:48px;padding-right:2px;letter-spacing:-0.3px;">NaN</div>
</div>
</div>
<div class="a" style="left:971px;top:404px;width:18px;height:204px;background:#f0f0f0"></div>
<div class="a" style="left:971px;top:428px;width:2px;height:180px;background:#fff"></div>
<div class="a" style="left:973px;top:526px;width:15px;height:11px;background:#cdcdcd"></div>
<svg class="a" style="left:975.5px;top:432.5px" width="10" height="10" viewBox="0 0 10 10"><path d="M1.9 6.9 L5 3.3 L8.1 6.9" stroke="#4a4a4a" stroke-width="1.9" fill="none"/></svg>
<div class="a" style="left:991px;top:364px;width:1px;height:244px;background:#fff"></div>
<div class="a" style="left:990px;top:367px;width:1px;height:241px;background:#fff"></div>
</body></html>
